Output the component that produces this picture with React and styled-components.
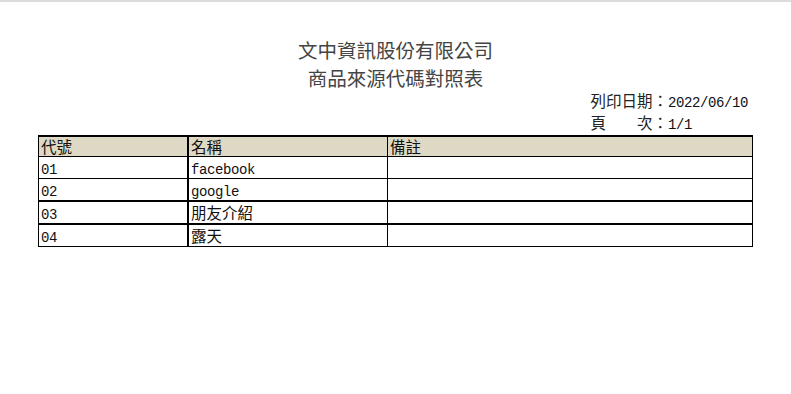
import styled, { createGlobalStyle } from "styled-components";

const GlobalStyle = createGlobalStyle`
  html, body {
    margin: 0;
    padding: 0;
    background: #fff;
  }
  body {
    font-family: "Noto Sans CJK TC", "Noto Sans", sans-serif;
    border-top: 2px solid #dcdcdc;
  }
`;

const Page = styled.div`
  width: 715px;
  margin: 0 auto;
  padding-top: 34px;
`;

const Title = styled.h1`
  margin: 0;
  text-align: center;
  font-size: 19.5px;
  font-weight: 400;
  line-height: 28px;
  color: #444;
`;

const Info = styled.div`
  display: flex;
  justify-content: flex-end;
  padding-right: 5px;
  margin-top: -3px;
`;

const InfoLines = styled.div`
  font-size: 15.5px;
  line-height: 22px;
  color: #222;
`;

const InfoLine = styled.div`
  height: 22px;
  white-space: nowrap;
`;

// half-width latin / digits, like the report's monospaced ASCII
const Half = styled.span`
  font-family: "Liberation Mono", monospace;
  font-size: 14px;
  letter-spacing: -0.4px;
  line-height: 1;
  color: #111;
`;

const Table = styled.table`
  width: 100%;
  margin-top: 2px;
  border-collapse: collapse;
  border: 1px solid #000;
  border-top: 2px solid #000;
  font-size: 15.5px;
  color: #111;
`;

const Head = styled.th`
  background: #ddd9c4;
  font-weight: 400;
  text-align: left;
  height: 19px;
  padding: 0 2px;
  line-height: 19px;
  border: 1px solid #000;
  border-left-width: ${(p) => (p.$thick ? "2px" : "1px")};
  width: ${(p) => p.$w};
`;

const Row = styled.tr`
  border-top: ${(p) => (p.$thick ? "2px" : "1px")} solid #000;
`;

const Cell = styled.td`
  height: 21px;
  padding: 0 2px;
  line-height: 21px;
  border-left: ${(p) => (p.$thick ? "2px" : "1px")} solid #000;
  border-right: 1px solid #000;
`;

const rows = [
  { code: "01", name: "facebook", latin: true },
  { code: "02", name: "google", latin: true },
  { code: "03", name: "朋友介紹", thick: true },
  { code: "04", name: "露天", thick: true },
];

export default function App() {
  return (
    <>
      <GlobalStyle />
      <Page>
        <Title>
          文中資訊股份有限公司
          <br />
          商品來源代碼對照表
        </Title>
        <Info>
          <InfoLines>
            <InfoLine>
              列印日期：<Half>2022/06/10</Half>
            </InfoLine>
            <InfoLine>
              頁　　次：<Half>1/1</Half>
            </InfoLine>
          </InfoLines>
        </Info>
        <Table>
          <thead>
            <tr>
              <Head $w="144px">代號</Head>
              <Head $w="194px" $thick>名稱</Head>
              <Head>備註</Head>
            </tr>
          </thead>
          <tbody>
            {rows.map((r) => (
              <Row key={r.code} $thick={r.thick}>
                <Cell>
                  <Half>{r.code}</Half>
                </Cell>
                <Cell $thick>{r.latin ? <Half>{r.name}</Half> : r.name}</Cell>
                <Cell />
              </Row>
            ))}
          </tbody>
        </Table>
      </Page>
    </>
  );
}
